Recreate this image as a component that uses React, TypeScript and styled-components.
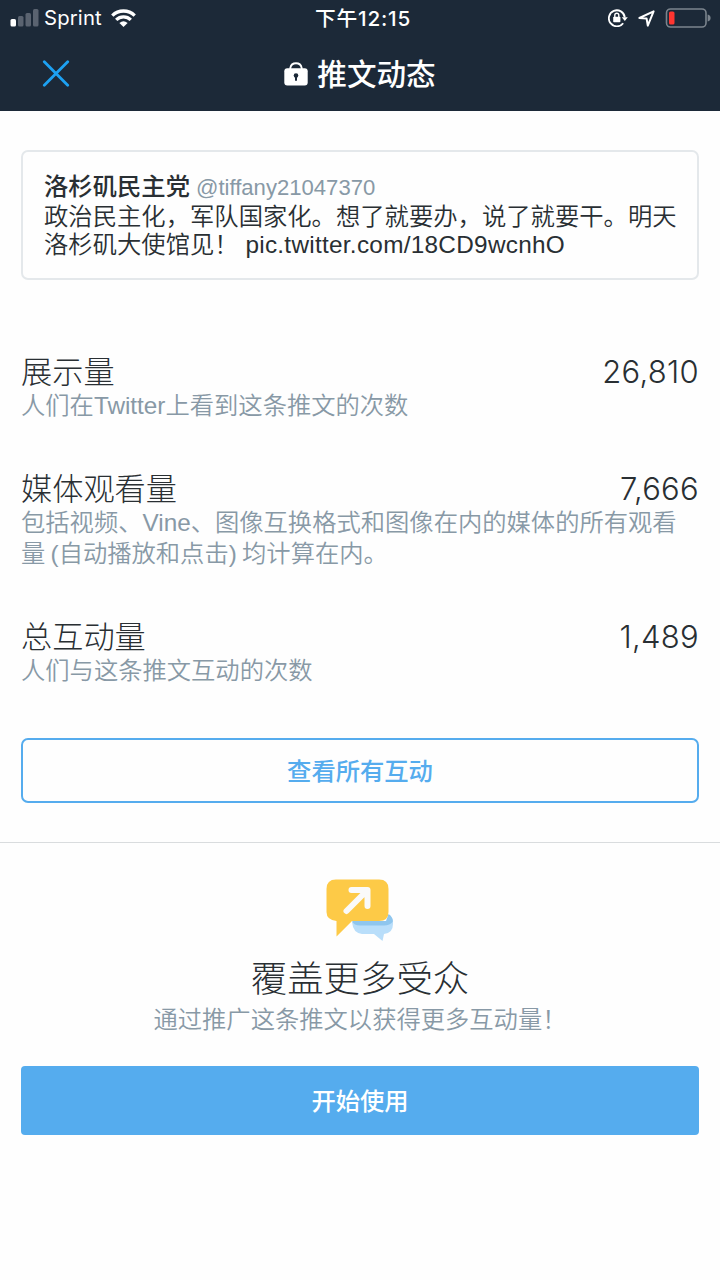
import React from "react";
import styled, { createGlobalStyle } from "styled-components";

const GlobalStyle = createGlobalStyle`
  * { box-sizing: border-box; }
  body { margin: 0; background: #fefefe; }
  button { font: inherit; margin: 0; cursor: pointer; }
  svg { display: block; flex: none; }
`;

const Screen = styled.div`
  width: 720px;
  height: 1280px;
  overflow: hidden;
  display: flex;
  flex-direction: column;
  background: #fefefe;
  color: #292f33;
  font-family: "Liberation Sans", "Noto Sans CJK SC", sans-serif;
`;

const Header = styled.header`
  height: 111px;
  flex: none;
  background: #1c2938;
  color: #fff;
`;

const StatusBar = styled.div`
  height: 36px;
  padding: 0 9px 0 10px;
  display: grid;
  grid-template-columns: 1fr auto 1fr;
  align-items: center;
  font-family: Inter, "Noto Sans CJK SC", sans-serif;
`;

const StatusGroup = styled.div<{ $end?: boolean }>`
  display: flex;
  align-items: center;
  justify-content: ${(p) => (p.$end ? "flex-end" : "flex-start")};
  gap: ${(p) => (p.$end ? "10px" : "0")};
`;

const Carrier = styled.span`
  font-size: 20.3px;
  line-height: 36px;
  margin: 0 9px 0 5px;
  letter-spacing: 0.15px;
`;

const Clock = styled.time`
  font-size: 20.7px;
  line-height: 34px;
  font-weight: 500;
  letter-spacing: 0.8px;
  padding: 2px 0 0 5px;
`;

const NavBar = styled.nav`
  height: 75px;
  padding: 0 42px;
  display: grid;
  grid-template-columns: 1fr auto 1fr;
  align-items: center;
`;

const CloseButton = styled.button`
  width: 28px;
  height: 28px;
  padding: 0;
  border: 0;
  background: none;
`;

const NavTitle = styled.h1`
  margin: 0;
  display: flex;
  align-items: center;
  gap: 9px;
  font-size: 29.6px;
  line-height: 40px;
  font-weight: 500;
`;

const NavTitleText = styled.span`
  padding-top: 2px;
`;

const Content = styled.main`
  padding: 39px 21px 0;
`;

const TweetCard = styled.article`
  height: 130px;
  padding: 20px 20px 0 21px;
  border: 2px solid #e4e8eb;
  border-radius: 7px;
  font-size: 24.33px;
`;

const Author = styled.div`
  line-height: 30px;
  white-space: nowrap;
`;

const Name = styled.strong`
  font-weight: 500;
`;

const Handle = styled.span`
  margin-left: 6px;
  font-size: 22.1px;
  color: #8899a6;
`;

const TweetText = styled.p`
  margin: 0;
  line-height: 28px;
  font-weight: 350;
  white-space: nowrap;
`;

const MediaLink = styled.span`
  letter-spacing: 0.28px;
`;

const Metrics = styled.section`
  margin-top: 76px;
  display: flex;
  flex-direction: column;
  gap: 51.4px;
`;

const MetricHead = styled.div`
  height: 34px;
  display: flex;
  justify-content: space-between;
  font-size: 31.2px;
  line-height: 34px;
  font-weight: 300;
`;

const MetricValue = styled.span`
  font-family: Inter, sans-serif;
  font-size: 31px;
  line-height: 32px;
  letter-spacing: 0.3px;
`;

const Description = styled.p`
  margin: 0;
  font-size: 24.3px;
  line-height: 31px;
  font-weight: 350;
  word-spacing: -1.5px;
  color: #8899a6;
  white-space: nowrap;

  ${MetricHead} + & {
    padding-top: 0.4px;
  }
`;

const Button = styled.button<{ $primary?: boolean }>`
  display: block;
  width: 100%;
  height: ${(p) => (p.$primary ? 69 : 65)}px;
  padding: 0 0 ${(p) => (p.$primary ? 1 : 2)}px;
  border: ${(p) => (p.$primary ? "0" : "2px solid #55acee")};
  border-radius: ${(p) => (p.$primary ? 4 : 7)}px;
  background: ${(p) => (p.$primary ? "#55acee" : "transparent")};
  color: ${(p) => (p.$primary ? "#fff" : "#55acee")};
  font-size: 24.3px;
  font-weight: 500;
`;

const Actions = styled.div`
  margin-top: 52px;
`;

const Promo = styled.section`
  margin-top: 39px;
  border-top: 1px solid #d9dcde;
  padding: 36px 21px 0;
  display: flex;
  flex-direction: column;
  align-items: center;
`;

const PromoTitle = styled.h2`
  margin: 15px 0 2px;
  font-size: 36.4px;
  line-height: 45px;
  font-weight: 300;
`;

const PromoAction = styled.div`
  width: 100%;
  margin-top: 31px;
`;

const metrics = [
  { title: "展示量", value: "26,810", lines: ["人们在Twitter上看到这条推文的次数"] },
  {
    title: "媒体观看量",
    value: "7,666",
    lines: ["包括视频、Vine、图像互换格式和图像在内的媒体的所有观看", "量 (自动播放和点击) 均计算在内。"],
  },
  { title: "总互动量", value: "1,489", lines: ["人们与这条推文互动的次数"] },
];

const SignalIcon = () => (
  <svg width="29" height="18" viewBox="0 0 29 18">
    <rect x="0.5" y="10" width="5.5" height="7.5" rx="1.5" fill="#fff" />
    <g fill="#5a6370">
      <rect x="8" y="7" width="5.5" height="10.5" rx="1.5" />
      <rect x="15.5" y="4" width="5.5" height="13.5" rx="1.5" />
      <rect x="23" y="0" width="5.5" height="17.5" rx="1.5" />
    </g>
  </svg>
);

const WifiIcon = () => (
  <svg width="25" height="18" viewBox="0 0 25 18">
    <g fill="none" stroke="#fff" strokeWidth="3.3">
      <path d="M1.3 6.6A15.9 15.9 0 0 1 23.7 6.6" />
      <path d="M5.2 10.9A10.4 10.4 0 0 1 19.8 10.9" />
    </g>
    <path d="M12.5 18L8.4 13.9Q12.5 10.6 16.6 13.9Z" fill="#fff" />
  </svg>
);

const RotationLockIcon = () => (
  <svg width="20" height="18" viewBox="0 0 20 18">
    <path d="M15.2 14.2A8 8 0 1 1 16.8 8.3" fill="none" stroke="#fff" strokeWidth="1.8" />
    <path d="M13.8 8.2H19.8L16.8 12Z" fill="#fff" />
    <rect x="5.2" y="7.7" width="7.2" height="5.6" rx="0.8" fill="#fff" />
    <path d="M6.8 8V6.2A2 2 0 0 1 10.8 6.2V8" fill="none" stroke="#fff" strokeWidth="1.4" />
  </svg>
);

const LocationIcon = () => (
  <svg width="17" height="17" viewBox="0 0 17 17">
    <path d="M1.4 8L15.6 1.4L9.8 15.6L8.6 8.6Z" fill="none" stroke="#fff" strokeWidth="2" strokeLinejoin="round" />
  </svg>
);

const BatteryIcon = () => (
  <svg width="46" height="20" viewBox="0 0 46 20">
    <rect x="1.5" y="1" width="39.5" height="18" rx="4" fill="none" stroke="#7b848d" strokeWidth="1.6" />
    <rect x="4" y="3.5" width="5.5" height="13" rx="1.6" fill="#ff3530" />
    <path d="M42.6 6.5Q45.6 7.2 45.6 10Q45.6 12.8 42.6 13.5Z" fill="#7b848d" />
  </svg>
);

const CloseIcon = () => (
  <svg width="28" height="28" viewBox="0 0 28 28">
    <path d="M2.3 1.8L25.7 25.2M25.7 1.8L2.3 25.2" fill="none" stroke="#1da1f2" strokeWidth="2.8" strokeLinecap="round" />
  </svg>
);

const LockIcon = () => (
  <svg width="24" height="25" viewBox="0 0 24 25">
    <path d="M6.3 9V7A5.8 5.8 0 0 1 17.7 7V9" fill="none" stroke="#fff" strokeWidth="1.8" />
    <rect x="0.3" y="7.3" width="23.4" height="17.2" rx="3" fill="#fff" />
    <circle cx="12" cy="14.5" r="2.3" fill="#1c2938" />
    <rect x="11" y="15" width="2" height="5" rx="1" fill="#1c2938" />
  </svg>
);

const PromoteIcon = () => (
  <svg width="68" height="63" viewBox="0 0 68 63">
    <path d="M26 43H67V45Q67 54 58 55L56.5 62L48 55H36Q27 54 26 43Z" fill="#b9defa" />
    <path d="M26 42H60L62.5 35Q67 38 67 42.5Q64 46.5 58 46.5H34Q28 46.5 26 42Z" fill="#8fc6ee" />
    <path d="M10 0.5H53Q62.5 0.5 62.5 10V33Q62.5 42 53 42H26L10.5 57.5V42Q0.5 41 0.5 33V10Q0.5 0.5 10 0.5Z" fill="#fdca47" />
    <path d="M20.5 32L40.5 12M25.5 11H41.5V27" fill="none" stroke="#fafafa" strokeWidth="6" strokeLinecap="round" strokeLinejoin="round" />
  </svg>
);

export default function App() {
  return (
    <Screen>
      <GlobalStyle />
      <Header>
        <StatusBar>
          <StatusGroup>
            <SignalIcon />
            <Carrier>Sprint</Carrier>
            <WifiIcon />
          </StatusGroup>
          <Clock>下午12:15</Clock>
          <StatusGroup $end>
            <RotationLockIcon />
            <LocationIcon />
            <BatteryIcon />
          </StatusGroup>
        </StatusBar>
        <NavBar>
          <CloseButton aria-label="关闭">
            <CloseIcon />
          </CloseButton>
          <NavTitle>
            <LockIcon />
            <NavTitleText>推文动态</NavTitleText>
          </NavTitle>
        </NavBar>
      </Header>
      <Content>
        <TweetCard>
          <Author>
            <Name>洛杉矶民主党</Name>
            <Handle>@tiffany21047370</Handle>
          </Author>
          <TweetText>
            政治民主化，军队国家化。想了就要办，说了就要干。明天
            <br />
            洛杉矶大使馆见！ <MediaLink>pic.twitter.com/18CD9wcnhO</MediaLink>
          </TweetText>
        </TweetCard>
        <Metrics>
          {metrics.map((m) => (
            <div key={m.title}>
              <MetricHead>
                <span>{m.title}</span>
                <MetricValue>{m.value}</MetricValue>
              </MetricHead>
              {m.lines.map((line) => (
                <Description key={line}>{line}</Description>
              ))}
            </div>
          ))}
        </Metrics>
        <Actions>
          <Button>查看所有互动</Button>
        </Actions>
      </Content>
      <Promo>
        <PromoteIcon />
        <PromoTitle>覆盖更多受众</PromoTitle>
        <Description>通过推广这条推文以获得更多互动量！</Description>
        <PromoAction>
          <Button $primary>开始使用</Button>
        </PromoAction>
      </Promo>
    </Screen>
  );
}
